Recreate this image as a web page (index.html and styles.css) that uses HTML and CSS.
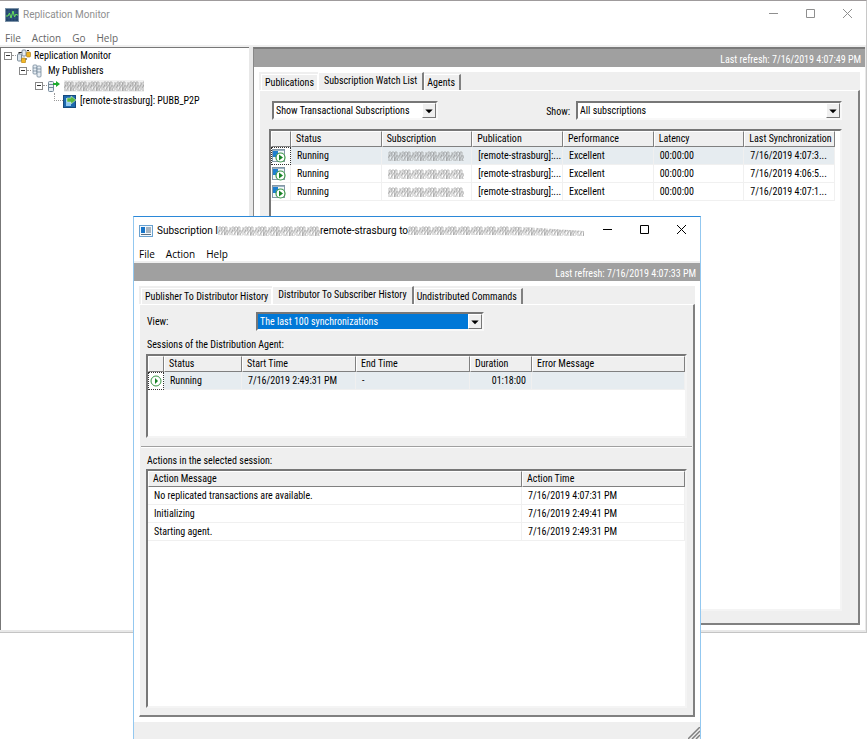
FILE: index.html
```html
<!DOCTYPE html>
<html lang="en">
<head>
<meta charset="utf-8">
<title>Replication Monitor</title>
<link rel="stylesheet" href="styles.css">
</head>
<body>
<svg class="defs" aria-hidden="true">
  <defs>
    <pattern id="scribble" width="13" height="10" patternUnits="userSpaceOnUse">
      <path d="M1 10V1h2l1 2-1 2H1M4 10V1h2l1 2-1 2 1 5M7 10V1h2M9 1v9h3M9 5h2M12 1v8M0 7l3-5M2 10l5-8M6 10l3-6M9 9l4-7" fill="none" stroke="#7c7c7c" stroke-width=".6"/>
    </pattern>
    <symbol id="job" viewBox="0 0 14 14">
      <rect x=".5" y=".5" width="12" height="12" fill="#f4f8fb" stroke="#8497a5"/>
      <path d="M1 1h11v1H1z" fill="#9cb3c4"/>
      <path d="M1 2h5v6H1z" fill="#1e7fd0"/>
      <circle cx="8.500" cy="8.500" r="4.500" fill="#fff" stroke="#3a9647" stroke-width="1.200"/>
      <path d="M7 5.500v6l4-3z" fill="#188327"/>
    </symbol>
    <symbol id="arrow" viewBox="0 0 12 14"><path d="M2 6h8L6 10z" fill="#000"/></symbol>
    <symbol id="min" viewBox="0 0 12 12"><path d="M1 6.500h9" stroke="currentColor"/></symbol>
    <symbol id="max" viewBox="0 0 12 12"><path d="M1.500 2.500h8v8h-8z" fill="none" stroke="currentColor"/></symbol>
    <symbol id="close" viewBox="0 0 12 12"><path d="M1 2l9 9M10 2l-9 9" stroke="currentColor"/></symbol>
  </defs>
</svg>

<main class="window">
  <header class="titlebar">
    <svg class="app-icon" viewBox="0 0 14 14"><rect x=".5" y=".5" width="13" height="13" fill="#24466b" stroke="#7d93a8"/><path d="M1 4h12M1 7h12M1 10h12M4 1v12M7 1v12M10 1v12" stroke="#3c6590" stroke-width=".5"/><path d="M1 8h2l1.500-3L6 10l2-7 1.500 6L11 6l1 1h1" fill="none" stroke="#69e25c"/></svg>
    <h1 class="caption">Replication Monitor</h1>
    <div class="window-buttons">
      <button type="button" aria-label="Minimize"><svg><use href="#min"/></svg></button>
      <button type="button" aria-label="Maximize"><svg><use href="#max"/></svg></button>
      <button type="button" aria-label="Close"><svg><use href="#close"/></svg></button>
    </div>
  </header>
  <nav class="menu">
    <button type="button">File</button><button type="button">Action</button><button type="button">Go</button><button type="button">Help</button>
  </nav>
  <div class="split">
    <ul class="tree">
      <li class="level-1"><span class="box"></span><span class="link"></span>
        <svg class="wide-icon" viewBox="0 0 15 14"><path d="M3 3.500h3M10 9v2M4 11V8M3 3v2M11 1.500h2" stroke="#222"/><rect x="1.500" y="5" width="4" height="7" rx="1" fill="#dce5ec" stroke="#7c8c99"/><rect x="6" y="1" width="4" height="6" rx="1" fill="#e8edf1" stroke="#7c8c99"/><rect x="10.500" y="3" width="4" height="5" rx="1" fill="#edb321" stroke="#a67614" stroke-width=".6"/><rect x="5.500" y="9" width="4" height="5" rx="1" fill="#f2b929" stroke="#a67614" stroke-width=".6"/></svg>
        <span>Replication Monitor</span></li>
      <li class="level-2"><span class="box"></span><span class="link"></span>
        <svg viewBox="0 0 13 14"><g fill="#e6edf3" stroke="#74889a" stroke-width=".8"><rect x="2" y="1" width="4" height="9" rx="1"/><rect x="6" y="2" width="4" height="11" rx="1"/><path d="M2 4h4M2 7h4M6 5h4M6 8h4"/></g></svg>
        <span>My Publishers</span></li>
      <li class="level-3"><span class="box"></span><span class="link"></span>
        <svg viewBox="0 0 13 14"><rect x="1.500" y="2.500" width="5" height="10" rx="1" fill="#e6edf3" stroke="#74889a"/><path d="M2 5.500h4M2 8.500h4" stroke="#74889a"/><path d="M6 4h3V2l4 3-4 3V6H6z" fill="#1cab2f"/></svg>
        <span class="selected"><svg class="redacted tree-redacted" role="img" aria-label="Redacted"><rect width="100%" height="10" fill="url(#scribble)"/></svg></span></li>
      <li class="level-4"><span class="link"></span>
        <svg viewBox="0 0 13 14"><rect x=".5" y="1.500" width="12" height="12" fill="#1d69ae" stroke="#174a7d"/><path d="M3 4h5v8H3z" fill="#92c9f0"/><path d="M4 4h4V2l5 4-5 4V8H4z" fill="#55b83f" stroke="#e7f5e4" stroke-width=".5"/></svg>
        <span>[remote-strasburg]: PUBB_P2P</span></li>
    </ul>
    <section class="detail">
      <p class="refresh">Last refresh: 7/16/2019 4:07:49 PM</p>
      <div class="tabs" role="tablist">
        <button type="button" role="tab" class="tab">Publications</button>
        <button type="button" role="tab" class="tab active" aria-selected="true">Subscription Watch List</button>
        <button type="button" role="tab" class="tab">Agents</button>
      </div>
      <div class="page watch">
        <div class="filters">
          <span class="combo type-combo"><select aria-label="Subscription type"><option>Show Transactional Subscriptions</option></select><svg class="drop"><use href="#arrow"/></svg></span>
          <label class="show-label" for="show">Show:</label>
          <span class="combo show-combo"><select id="show"><option>All subscriptions</option></select><svg class="drop"><use href="#arrow"/></svg></span>
        </div>
        <div class="list">
          <table class="watch-table">
            <colgroup><col class="icon-col"><col span="6"></colgroup>
            <thead><tr><th></th><th>Status</th><th>Subscription</th><th>Publication</th><th>Performance</th><th>Latency</th><th>Last Synchronization</th></tr></thead>
            <tbody>
              <tr class="current"><td class="focus"><svg class="job"><use href="#job"/></svg></td><td>Running</td><td><svg class="redacted" role="img" aria-label="Redacted"><rect width="76" height="10" fill="url(#scribble)"/></svg></td><td>[remote-strasburg]:...</td><td>Excellent</td><td>00:00:00</td><td>7/16/2019 4:07:3...</td></tr>
              <tr><td><svg class="job"><use href="#job"/></svg></td><td>Running</td><td><svg class="redacted" role="img" aria-label="Redacted"><rect width="76" height="10" fill="url(#scribble)"/></svg></td><td>[remote-strasburg]:...</td><td>Excellent</td><td>00:00:00</td><td>7/16/2019 4:06:5...</td></tr>
              <tr><td><svg class="job"><use href="#job"/></svg></td><td>Running</td><td><svg class="redacted" role="img" aria-label="Redacted"><rect width="76" height="10" fill="url(#scribble)"/></svg></td><td>[remote-strasburg]:...</td><td>Excellent</td><td>00:00:00</td><td>7/16/2019 4:07:1...</td></tr>
            </tbody>
          </table>
        </div>
      </div>
    </section>
  </div>
</main>

<section class="dialog" role="dialog" aria-label="Subscription">
  <header class="titlebar">
    <svg class="app-icon" viewBox="0 0 14 14"><rect x=".5" y="1.500" width="13" height="11" fill="#f2f8fd" stroke="#69a1cf"/><path d="M2 3h4v6H2z" fill="#1874c7"/><path d="M7 4h5M7 6h5M7 8h5M2 10.500h10" stroke="#5b6f80"/></svg>
    <h2 class="caption">Subscription I<svg class="redacted title-redacted" role="img" aria-label="Redacted"><path d="M0 0h102v10H50L0 9z" fill="url(#scribble)"/></svg>remote-strasburg to<svg class="redacted title-redacted-long" role="img" aria-label="Redacted"><path d="M0 0h100l76 5v5L80 9H0z" fill="url(#scribble)"/></svg></h2>
    <div class="window-buttons">
      <button type="button" aria-label="Minimize"><svg><use href="#min"/></svg></button>
      <button type="button" aria-label="Maximize"><svg><use href="#max"/></svg></button>
      <button type="button" aria-label="Close"><svg><use href="#close"/></svg></button>
    </div>
  </header>
  <nav class="menu">
    <button type="button">File</button><button type="button">Action</button><button type="button">Help</button>
  </nav>
  <p class="refresh">Last refresh: 7/16/2019 4:07:33 PM</p>
  <div class="tabs" role="tablist">
    <button type="button" role="tab" class="tab">Publisher To Distributor History</button>
    <button type="button" role="tab" class="tab active" aria-selected="true">Distributor To Subscriber History</button>
    <button type="button" role="tab" class="tab">Undistributed Commands</button>
  </div>
  <div class="page history">
    <div class="view-row">
      <label for="view">View:</label>
      <span class="combo view-combo"><select id="view"><option>The last 100 synchronizations</option></select><svg class="drop"><use href="#arrow"/></svg></span>
    </div>
    <h3 class="list-title">Sessions of the Distribution Agent:</h3>
    <div class="list sessions">
      <table>
        <colgroup><col class="session-icon"><col class="session-status"><col class="session-time"><col class="session-time"><col class="session-duration"><col></colgroup>
        <thead><tr><th></th><th>Status</th><th>Start Time</th><th>End Time</th><th>Duration</th><th>Error Message</th></tr></thead>
        <tbody><tr class="current"><td class="focus"><svg class="job" viewBox="0 0 14 14"><circle cx="7" cy="7" r="5" fill="#fff" stroke="#3a9647"/><path d="M6 4v6l3-3z" fill="#188327"/></svg></td><td>Running</td><td>7/16/2019 2:49:31 PM</td><td>-</td><td class="number">01:18:00</td><td></td></tr></tbody>
      </table>
    </div>
    <hr>
    <h3 class="list-title">Actions in the selected session:</h3>
    <div class="list actions">
      <table>
        <colgroup><col><col class="action-time"></colgroup>
        <thead><tr><th>Action Message</th><th>Action Time</th></tr></thead>
        <tbody>
          <tr><td>No replicated transactions are available.</td><td>7/16/2019 4:07:31 PM</td></tr>
          <tr><td>Initializing</td><td>7/16/2019 2:49:41 PM</td></tr>
          <tr><td>Starting agent.</td><td>7/16/2019 2:49:31 PM</td></tr>
        </tbody>
      </table>
    </div>
  </div>
  <footer class="status"><svg viewBox="0 0 12 12"><path d="M0 12L12 0M4 12l8-8M8 12l4-4" stroke="#808080" stroke-width="1.500"/></svg></footer>
</section>
</body>
</html>
```
FILE: styles.css
```css
* { box-sizing: border-box; }

body {
  margin: 0;
  height: 100vh;
  padding-bottom: 106px;
  overflow: hidden;
  background: #fff;
  color: #000;
  font: 10px/14px "Roboto Condensed", "Liberation Sans", sans-serif;
}

button, select { font: inherit; color: inherit; }
button { padding: 0; border: 0; background: none; }
h1, h2, h3, p, ul { margin: 0; padding: 0; font-size: inherit; font-weight: normal; }
.defs { position: absolute; width: 0; height: 0; }

.window {
  display: flex;
  flex-direction: column;
  height: 100%;
  border-top: 1px solid #9f9b9c;
  border-right: 1px solid #c8c8c8;
  border-bottom: 1px solid #c4c4c4;
  background: #fff;
}

.titlebar {
  display: flex;
  align-items: center;
  height: 27px;
  padding-left: 5px;
  font: 10px/14px Roboto, "Noto Sans", sans-serif;
}
.app-icon { width: 14px; height: 14px; margin-right: 4px; }
.caption { display: flex; align-items: center; flex: 1; white-space: nowrap; }
.window-buttons { display: flex; }
.window-buttons button { width: 37px; height: 20px; }
.window-buttons svg { width: 12px; height: 12px; }
.window .titlebar { color: #8f8f8f; }

.menu {
  display: flex;
  gap: 11px;
  height: 19px;
  padding-left: 5px;
  border-bottom: 2px solid #efefef;
  font: 10px/20px "Open Sans", "Noto Sans", sans-serif;
}
.window .menu { color: #666; }

.split {
  display: flex;
  flex: 1;
  gap: 4px;
  min-height: 0;
  padding: 0 1px 2px 0;
  background: #e8e8e8;
}

.tree {
  width: 249px;
  border-top: 1px solid #777;
  border-left: 1px solid #777;
  padding-left: 3px;
  background: #fff;
  list-style: none;
}
.tree li { display: flex; align-items: center; height: 15px; white-space: nowrap; }
.tree svg { width: 13px; height: 14px; margin-right: 4px; }
.tree .wide-icon { width: 15px; margin-right: 3px; }
.level-2 { padding-left: 15px; }
.level-3 { padding-left: 31px; }
.level-4 { padding-left: 50px; }
.box {
  width: 8px;
  height: 8px;
  border: 1px solid #888;
  background: linear-gradient(#333, #333) center / 4px 1px no-repeat;
}
.link { width: 4px; border-top: 1px dotted #999; }
.level-4 .link { width: 9px; height: 8px; margin-top: -8px; border: dotted #999; border-width: 0 0 1px 1px; }
.selected { display: flex; background: #f0f0f0; }
.redacted { display: block; width: 76px; height: 10px; opacity: .8; }
.tree .tree-redacted { width: 80px; height: 10px; margin: 1px 0; }

.detail {
  display: flex;
  flex: 1;
  flex-direction: column;
  min-width: 0;
  padding-bottom: 5px;
  border-top: 2px solid #7a7a7a;
  border-left: 1px solid #888;
  background: #fff;
}
.refresh {
  height: 18px;
  padding-right: 4px;
  background: #a0a0a0;
  color: #fff;
  line-height: 22px;
  text-align: right;
}

.tabs {
  display: flex;
  align-items: flex-end;
  height: 18px;
  margin: 5px 5px 0;
  padding-left: 2px;
  background: #efefef;
}
.tab {
  height: 16px;
  padding: 0 3px;
  border: 1px solid #fff;
  border-bottom: 0;
  background: #efefef;
  white-space: nowrap;
}
.tab:last-child { border-right: 2px solid #808080; padding: 0 4px 0 2px; }
.tab.active { height: 18px; padding: 0 5px 2px; border-right: 2px solid #808080; }

.page {
  display: flex;
  flex: 1;
  flex-direction: column;
  min-height: 0;
  margin: 0 5px;
  border: 1px solid #fff;
  border-right: 2px solid #808080;
  border-bottom: 2px solid #808080;
  background: #efefef;
}
.watch { padding: 10px 16px 12px 9px; }
.filters { display: flex; align-items: center; margin: 0 0 9px 3px; }
.combo {
  display: flex;
  height: 19px;
  border: 2px solid;
  border-color: #777 #f8f8f8 #f8f8f8 #777;
  background: #fff;
}
.combo select { flex: 1; min-width: 0; padding: 0 0 0 2px; border: 0; border-radius: 0; background: #fff; appearance: none; outline: 0; }
.drop {
  width: 14px;
  height: 15px;
  border: 1px solid;
  border-color: #fff #777 #777 #fff;
  background: #efefef;
  pointer-events: none;
}
.type-combo { width: 166px; }
.show-label { margin: 2px 6px 0 auto; }
.show-combo { width: 266px; }

.list {
  border: 2px solid;
  border-color: #777 #f4f4f4 #f4f4f4 #777;
  background: #fff;
  overflow: hidden;
}
.watch .list { flex: 1; }
table { width: 100%; border-collapse: separate; border-spacing: 0; table-layout: fixed; }
.watch-table { width: calc(100% - 5px); }
th {
  height: 16px;
  padding: 0 0 0 4px;
  border: 1px solid;
  border-color: #fff #808080 #808080 #fff;
  background: #efefef;
  font-weight: normal;
  line-height: 14px;
  text-align: left;
  white-space: nowrap;
}
td {
  height: 18px;
  padding: 0 0 0 6px;
  border: solid #f0f0f0;
  border-width: 0 1px 1px 0;
  line-height: 14px;
  white-space: nowrap;
}
.icon-col { width: 20px; }
td:first-child:has(svg) { padding: 0 0 0 1px; }
.current { background: #e6ecf0; }
.current .focus { border: 1px dotted #333; background: #fff; padding: 0; }
.job { display: block; width: 14px; height: 14px; }

.dialog {
  position: absolute;
  inset: 216px 166px 0 133px;
  display: flex;
  flex-direction: column;
  border: 1px solid #93c8f0;
  border-top-color: #2b88d8;
  border-bottom: 0;
  background: #fff;
}
.dialog .tabs { margin-top: 5px; }
.title-redacted { width: 102px; }
.title-redacted-long { width: 176px; }
.history { padding: 7px 6px 7px 6px; }
.view-row { display: flex; align-items: center; padding-left: 1px; }
.view-row label { width: 109px; }
.view-combo { width: 228px; }
.view-combo select { background: #0078d7; color: #fff; }
.list-title { margin: 7px 0 2px 1px; }
.sessions { height: 84px; }
.session-icon { width: 16px; }
.session-status { width: 78px; }
.session-time { width: 114px; }
.session-duration { width: 62px; }
.number { padding-right: 5px; text-align: right; }
hr { align-self: stretch; height: 2px; margin: 8px -5px 0; border: 0; border-top: 1px solid #a0a0a0; border-bottom: 1px solid #fff; }
.history hr + .list-title { margin: 6px 0 1px 1px; }
.actions { flex: 1; }
.action-time { width: 163px; }
.status { display: flex; justify-content: flex-end; align-items: flex-end; height: 17px; margin-top: 5px; background: #efefef; }
.status svg { width: 12px; height: 12px; }
```
